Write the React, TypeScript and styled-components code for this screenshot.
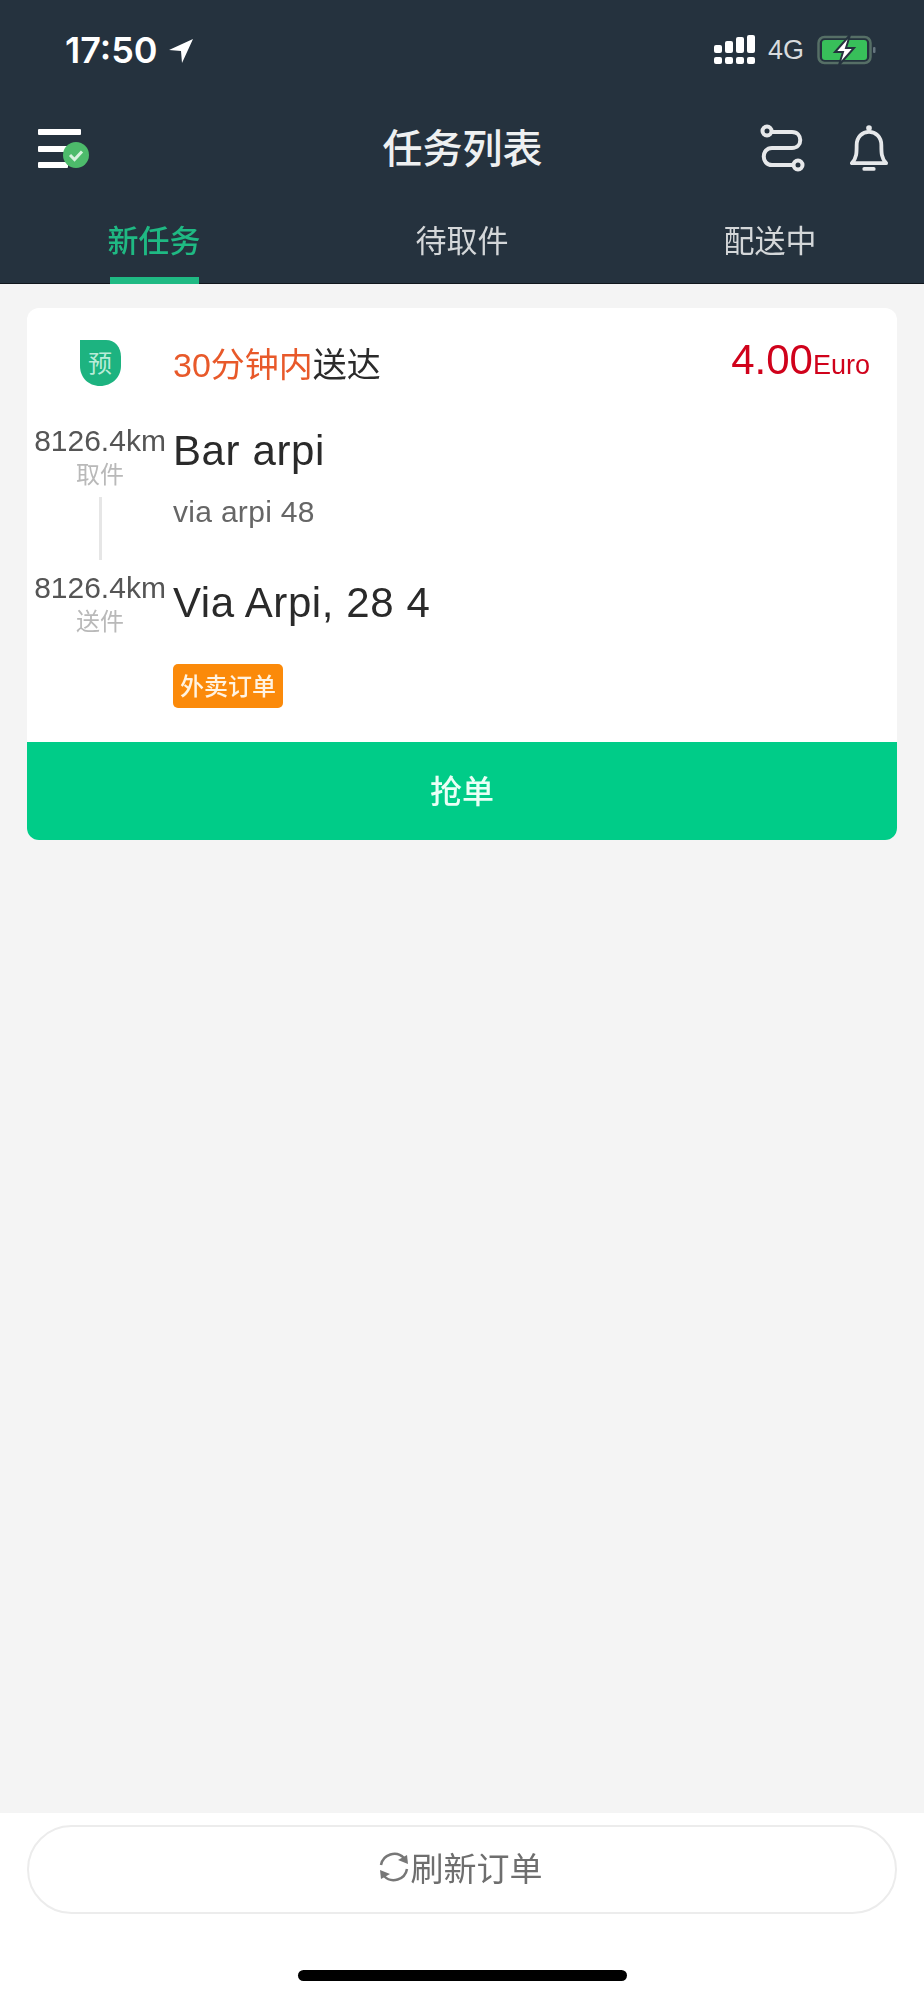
import React from "react";
import styled, { createGlobalStyle } from "styled-components";

const GlobalStyle = createGlobalStyle`
  html, body { margin: 0; padding: 0; background: #f4f4f4; }
  body { font-family: "Liberation Sans", "Noto Sans CJK SC", sans-serif; }
`;

const cjk = `"Noto Sans CJK SC", "Liberation Sans", sans-serif`;

const Page = styled.div`
  width: 924px;
  height: 2000px;
  display: flex;
  flex-direction: column;
  overflow: hidden;
  filter: blur(0.6px);
`;

const Header = styled.header`
  height: 284px;
  box-sizing: border-box;
  background: #25323e;
  border-bottom: 1px solid #10171d;
  display: flex;
  flex-direction: column;
  flex-shrink: 0;
`;

const StatusBar = styled.div`
  height: 100px;
  box-sizing: border-box;
  padding: 0 47px 0 65px;
  display: flex;
  align-items: center;
  justify-content: space-between;
`;

const Clock = styled.div`
  display: flex;
  align-items: center;
  gap: 10px;
  color: #fff;
  font: 600 36px Inter, sans-serif;
`;

const StatusIcons = styled.div`
  display: flex;
  align-items: center;
  gap: 13px;
`;

const Network = styled.span`
  color: #d8dbde;
  font: 400 27px "Liberation Sans", sans-serif;
`;

const NavRow = styled.div`
  height: 96px;
  box-sizing: border-box;
  padding: 0 36px 0 37px;
  display: grid;
  grid-template-columns: 1fr auto 1fr;
  align-items: center;
`;

const Title = styled.h1`
  margin: 0 0 5px;
  color: #eef0f1;
  font: 500 40px ${cjk};
`;

const NavActions = styled.div`
  display: flex;
  justify-content: flex-end;
  align-items: center;
  gap: 44px;
`;

const Tabs = styled.nav`
  flex: 1;
  display: grid;
  grid-template-columns: repeat(3, 1fr);
`;

const Tab = styled.div<{ $active?: boolean }>`
  position: relative;
  display: flex;
  align-items: center;
  justify-content: center;
  padding-bottom: 2px;
  font: ${(p) => (p.$active ? 500 : 400)} 31px ${cjk};
  color: ${(p) => (p.$active ? "#1fb983" : "#d4d7d9")};

  ${(p) =>
    p.$active &&
    `&::after {
      content: "";
      position: absolute;
      left: 110px;
      bottom: -1px;
      width: 89px;
      height: 7px;
      background: #1fb983;
    }`}
`;

const Main = styled.main`
  flex: 1;
  padding: 24px 27px 0;
`;

const Card = styled.section`
  background: #fff;
  border-radius: 12px;
  overflow: hidden;
`;

const CardTop = styled.div`
  height: 434px;
  box-sizing: border-box;
  padding-right: 27px;
  display: grid;
  grid-template-columns: 146px 1fr;
  grid-template-rows: 86px 270px auto;
`;

const BadgeCell = styled.div`
  display: flex;
  align-items: flex-end;
  justify-content: center;
  padding-bottom: 8px;
`;

const MetaRow = styled.div`
  display: flex;
  align-items: center;
  justify-content: space-between;
  padding-top: 28px;
`;

const Deadline = styled.div`
  font-size: 34px;
  color: #2b2b2b;
  line-height: 46px;
`;

const Urgent = styled.span`
  color: #e8592a;
`;

const Price = styled.div`
  color: #d0021b;
  font-size: 42px;
  line-height: 50px;
  margin-bottom: 5px;
`;

const PriceUnit = styled.span`
  font-size: 27px;
`;

const DistanceColumn = styled.div`
  display: flex;
  flex-direction: column;
  align-items: center;
  padding-top: 29px;
`;

const Distance = styled.div`
  color: #555;
  font-size: 30px;
  line-height: 36px;
  white-space: nowrap;
`;

const Kind = styled.div`
  color: #b9b9b9;
  font: 400 24px/28px ${cjk};
`;

const Connector = styled.div`
  width: 3px;
  height: 63px;
  margin: 10px 0 10px;
  background: #e6e6e6;
`;

const PlaceColumn = styled.div`
  display: flex;
  flex-direction: column;
  align-items: flex-start;
  padding-top: 32px;
`;

const PlaceName = styled.div<{ $gap: number }>`
  color: #2a2a2a;
  font-size: 42px;
  line-height: 50px;
  letter-spacing: 0.6px;
  margin-bottom: ${(p) => p.$gap}px;
`;

const PlaceAddress = styled.div`
  color: #666;
  font-size: 30px;
  line-height: 36px;
  letter-spacing: 0.3px;
  margin-bottom: 48px;
`;

const TagCell = styled.div`
  grid-column: 2;
  display: flex;
  align-items: flex-start;
`;

const Tag = styled.span`
  height: 44px;
  width: 110px;
  padding-bottom: 3px;
  box-sizing: border-box;
  display: flex;
  align-items: center;
  justify-content: center;
  border-radius: 5px;
  background: #fb8a0a;
  color: #fff3e2;
  font: 500 24px ${cjk};
`;

const GrabButton = styled.button`
  display: block;
  width: 100%;
  height: 98px;
  padding-bottom: 6px;
  border: 0;
  background: #00cc88;
  color: #eafff6;
  font: 500 32px ${cjk};
`;

const Footer = styled.footer`
  height: 187px;
  box-sizing: border-box;
  background: #fff;
  padding: 12px 27px 0;
  position: relative;
  flex-shrink: 0;
`;

const RefreshButton = styled.button`
  width: 100%;
  height: 89px;
  box-sizing: border-box;
  padding: 0 4px 5px 0;
  border: 2px solid #ececec;
  border-radius: 45px;
  background: #fff;
  color: #6e6e6e;
  font: 400 33px ${cjk};
  display: flex;
  align-items: center;
  justify-content: center;
  gap: 1px;
`;

const HomeIndicator = styled.div`
  position: absolute;
  left: 298px;
  bottom: 19px;
  width: 329px;
  height: 11px;
  border-radius: 6px;
  background: #000;
`;

const LocationIcon = () => (
  <svg width="26" height="25" viewBox="0 0 26 25">
    <path d="M1 12 L25 1 L14 25 L13 13 Z" fill="#fff" strokeLinejoin="round" />
  </svg>
);

// signal dots on the bottom row, taller bars above them
const signalBars = [10, 6, 2, 0];

const SignalIcon = () => (
  <svg width="41" height="30" viewBox="0 0 41 30" fill="#fff">
    {signalBars.map((top, col) => (
      <g key={col}>
        <rect x={col * 11} y={top} width="8" height={18 - top} rx="2" />
        <rect x={col * 11} y="22" width="8" height="7" rx="2" />
      </g>
    ))}
  </svg>
);

const BatteryIcon = () => (
  <svg width="60" height="32" viewBox="0 0 60 32">
    <rect x="1.5" y="3" width="52" height="26" rx="6" fill="none" stroke="#566f66" strokeWidth="2.5" />
    <rect x="5" y="6" width="45" height="20" rx="3" fill="#38bf5a" />
    <rect x="56" y="13" width="2.5" height="6" rx="1" fill="#66757f" />
    <path
      d="M33 1 L18 18 L26 18 L22 31 L37 14 L29 14 Z"
      fill="#fff"
      stroke="#25323e"
      strokeWidth="2"
    />
  </svg>
);

const MenuIcon = () => (
  <svg width="54" height="44" viewBox="0 0 54 44">
    <g fill="#fff">
      <rect x="1" y="3" width="43" height="6" rx="1" />
      <rect x="1" y="20" width="30" height="6" rx="1" />
      <rect x="1" y="36" width="30" height="6" rx="1" />
    </g>
    <circle cx="39" cy="29" r="13" fill="#4dbb6b" />
    <path d="M33 29 L37.5 33.5 L45 25.5" fill="none" stroke="#d7f2de" strokeWidth="3" />
  </svg>
);

const RouteIcon = () => (
  <svg width="46" height="48" viewBox="0 0 46 48" fill="none" stroke="#e6e8ea" strokeWidth="4">
    <circle cx="7" cy="7" r="4.5" />
    <circle cx="38" cy="41" r="4.5" />
    <path d="M12 8 H32 C43 8 43 24 32 24 H12 C1 24 1 41 12 41 H33" strokeLinecap="round" />
  </svg>
);

const BellIcon = () => (
  <svg width="38" height="48" viewBox="0 0 40 50" fill="none" stroke="#e6e8ea" strokeWidth="4">
    <path d="M2 41 H38 C33 36 33 30 33 22 C33 13 27 8 20 8 C13 8 7 13 7 22 C7 30 7 36 2 41 Z" strokeLinejoin="round" />
    <circle cx="20" cy="4" r="3" fill="#e6e8ea" stroke="none" />
    <path d="M15 47 H25" strokeLinecap="round" strokeWidth="4" />
  </svg>
);

const PreBadge = () => (
  <svg width="42" height="46" viewBox="0 0 42 46">
    <path d="M1 0 H27 C36 0 42 7 42 17 V26 C42 37 33 46 21 46 C9 46 1 37 1 26 Z" fill="#1db380" />
    <text x="21" y="32" textAnchor="middle" fontSize="24" fill="#b9ecd8" fontFamily={cjk}>
      预
    </text>
  </svg>
);

const RefreshIcon = () => (
  <svg width="32" height="32" viewBox="0 0 32 32" fill="none" stroke="#777" strokeWidth="2.5">
    <path d="M3 14 A13.5 13.5 0 0 1 26 7" />
    <path d="M29 18 A13.5 13.5 0 0 1 6 25" />
    <path d="M30 13 L20 9 L29 4 Z" fill="#777" stroke="none" />
    <path d="M2 19 L12 23 L3 28 Z" fill="#777" stroke="none" />
  </svg>
);

export default function App() {
  return (
    <Page>
      <GlobalStyle />
      <Header>
        <StatusBar>
          <Clock>
            17:50
            <LocationIcon />
          </Clock>
          <StatusIcons>
            <SignalIcon />
            <Network>4G</Network>
            <BatteryIcon />
          </StatusIcons>
        </StatusBar>
        <NavRow>
          <MenuIcon />
          <Title>任务列表</Title>
          <NavActions>
            <RouteIcon />
            <BellIcon />
          </NavActions>
        </NavRow>
        <Tabs>
          <Tab $active>新任务</Tab>
          <Tab>待取件</Tab>
          <Tab>配送中</Tab>
        </Tabs>
      </Header>
      <Main>
        <Card>
          <CardTop>
            <BadgeCell>
              <PreBadge />
            </BadgeCell>
            <MetaRow>
              <Deadline>
                <Urgent>30分钟内</Urgent>送达
              </Deadline>
              <Price>
                4.00<PriceUnit>Euro</PriceUnit>
              </Price>
            </MetaRow>
            <DistanceColumn>
              <Distance>8126.4km</Distance>
              <Kind>取件</Kind>
              <Connector />
              <Distance>8126.4km</Distance>
              <Kind>送件</Kind>
            </DistanceColumn>
            <PlaceColumn>
              <PlaceName $gap={18}>Bar arpi</PlaceName>
              <PlaceAddress>via arpi 48</PlaceAddress>
              <PlaceName $gap={0}>Via Arpi, 28 4</PlaceName>
            </PlaceColumn>
            <TagCell>
              <Tag>外卖订单</Tag>
            </TagCell>
          </CardTop>
          <GrabButton>抢单</GrabButton>
        </Card>
      </Main>
      <Footer>
        <RefreshButton>
          <RefreshIcon />
          刷新订单
        </RefreshButton>
        <HomeIndicator />
      </Footer>
    </Page>
  );
}
